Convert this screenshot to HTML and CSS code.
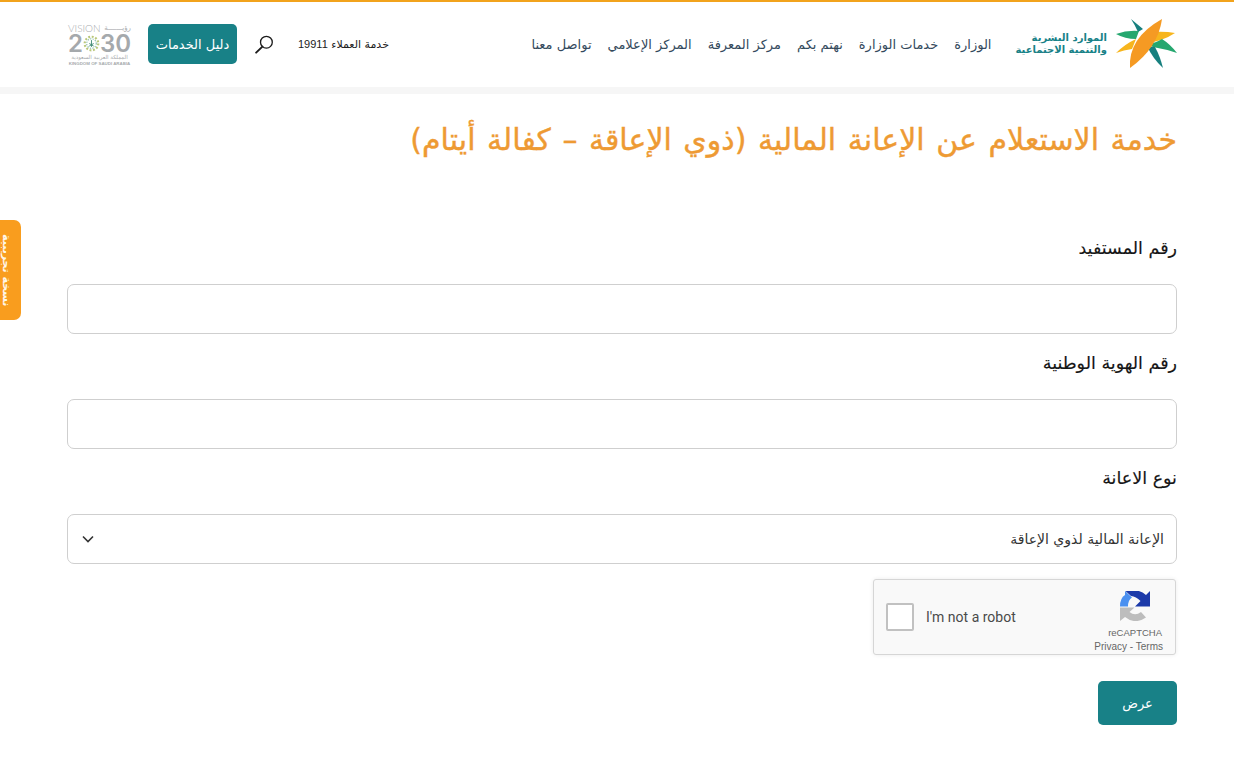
FILE: index.html
```html
<!DOCTYPE html>
<html lang="ar" dir="rtl">
<head>
<meta charset="utf-8">
<title>خدمة الاستعلام عن الإعانة المالية</title>
<link rel="stylesheet" href="styles.css">
</head>
<body>
<header class="site-header">
  <div class="header-inner">
    <div class="header-start">
      <a class="brand" href="#">
        <svg class="brand-mark" viewBox="0 0 62 51" width="62" height="51" aria-hidden="true">
          <path d="M16 1 L28 11 L23 14 Q20 7 16 1 Z" fill="#17807f"/>
          <path d="M1 16 Q12 12 24 13 L21 21 Q10 21 1 16 Z" fill="#25a76f"/>
          <path d="M1 35 Q10 26 21 21 L17 31 Q9 32 1 35 Z" fill="#f7b51d"/>
          <path d="M37 14 Q50 13 60 15 Q48 23 32 25 Z" fill="#f7b51d"/>
          <path d="M33 26 Q41 25 47 21 Q55 26 62 35 Q50 31 38 29 Z" fill="#25a76f"/>
          <path d="M32 28 L40 29 Q45 38 48 50 Q38 41 32 28 Z" fill="#17807f"/>
          <path d="M15 50 Q13 20 47 1 Q43 30 15 50 Z" fill="#f59a23"/>
        </svg>
        <span class="brand-name">الموارد البشرية<br>والتنمية الاجتماعية</span>
      </a>
      <nav class="main-nav">
        <a href="#">الوزارة</a>
        <a href="#">خدمات الوزارة</a>
        <a href="#">نهتم بكم</a>
        <a href="#">مركز المعرفة</a>
        <a href="#">المركز الإعلامي</a>
        <a href="#">تواصل معنا</a>
      </nav>
    </div>
    <div class="header-end">
      <span class="hotline">خدمة العملاء <span class="hotline-num">19911</span></span>
      <button class="search-btn" aria-label="بحث">
        <svg viewBox="0 0 20 20" width="19" height="19" aria-hidden="true">
          <circle cx="12" cy="7.6" r="6.2" fill="none" stroke="#1c1c1c" stroke-width="1.4"/>
          <path d="M7.8 12.2 L1.2 18.6" stroke="#1c1c1c" stroke-width="2" stroke-linecap="round"/>
        </svg>
      </button>
      <a class="services-btn" href="#">دليل الخدمات</a>
      <div class="vision" dir="ltr">
        <div class="vision-top"><span>VISION</span><span class="vision-ar">رؤيـــــــة</span></div>
        <div class="vision-year"><span>2</span><svg viewBox="0 0 20 20" width="19" height="19" aria-hidden="true"><circle cx="10" cy="10" r="8" fill="none" stroke="#b9c77a" stroke-width="2.6" stroke-dasharray="2.2 2"/><circle cx="10" cy="10" r="5.6" fill="none" stroke="#7fb9a4" stroke-width="1.2" stroke-dasharray="1.5 1.5"/><path d="M10 6 V14 M7.4 13 L12.6 10 M7.4 10 L12.6 13" stroke="#3f8a74" stroke-width="1.1" fill="none"/></svg><span>30</span></div>
        <div class="vision-sub">المملكة العربية السعودية</div>
        <div class="vision-en">KINGDOM OF SAUDI ARABIA</div>
      </div>
    </div>
  </div>
</header>
<div class="band"></div>
<aside class="side-tab"><span>نسخة تجريبية</span></aside>
<main class="content">
  <h1 class="page-title">خدمة الاستعلام عن الإعانة المالية (ذوي الإعاقة – كفالة أيتام)</h1>
  <form class="inquiry">
    <div class="field">
      <label class="field-label" for="ben">رقم المستفيد</label>
      <input class="field-control" id="ben" type="text">
    </div>
    <div class="field">
      <label class="field-label" for="nid">رقم الهوية الوطنية</label>
      <input class="field-control" id="nid" type="text">
    </div>
    <div class="field field-select">
      <label class="field-label" for="kind">نوع الاعانة</label>
      <div class="field-control select-box" id="kind">
        <span>الإعانة المالية لذوي الإعاقة</span>
        <svg viewBox="0 0 12 8" width="12" height="8" aria-hidden="true"><path d="M1 1.5 L6 6.5 L11 1.5" fill="none" stroke="#333" stroke-width="1.6"/></svg>
      </div>
    </div>
    <div class="captcha" dir="ltr">
      <span class="captcha-check"></span>
      <span class="captcha-text">I'm not a robot</span>
      <div class="captcha-brand">
        <svg class="captcha-logo" viewBox="0 0 30 30" width="30" height="30" aria-hidden="true">
          <path d="M5 0 L12 6.5 Q8 9 8 15.5 L0 15.5 Q0 7 5 4 Z" fill="#4a90f0"/>
          <path d="M11 5 L5.5 0 Q18 -3 26 4 L30 0 L30 15.5 L15 15.5 L20.5 10 Q16 5.5 11 5 Z" fill="#1c3aa9"/>
          <path d="M0 16.5 L14.5 16.5 L9.5 21 Q15 25.5 21 21 L26 26.5 Q15 34 5 26 L0 30 Z" fill="#bdbdbd"/>
        </svg>
        <span class="captcha-name">reCAPTCHA</span>
        <span class="captcha-links">Privacy - Terms</span>
      </div>
    </div>
    <div class="actions"><button class="submit" type="button">عرض</button></div>
  </form>
</main>
</body>
</html>
```
FILE: styles.css
```css
* { box-sizing: border-box; }
html, body { margin: 0; padding: 0; }
body {
  background: #fff;
  color: #1d1d1d;
  font-family: "DejaVu Sans", "Noto Sans", sans-serif;
  height: 760px;
  overflow: hidden;
  position: relative;
}
a { color: inherit; text-decoration: none; }

.site-header { height: 87px; background: #fff; border-top: 2px solid #f2a31c; }
.header-inner {
  margin: 0 57px 0 68px;
  height: 84px;
  display: flex;
  align-items: center;
  justify-content: space-between;
}
.header-start { display: flex; align-items: center; }
.brand { display: flex; align-items: center; gap: 8px; }
.brand-mark { display: block; margin-top: -2px; }
.brand-name {
  color: #188187;
  font-size: 10px;
  line-height: 12px;
  font-weight: 700;
  white-space: nowrap;
}
.main-nav {
  display: flex;
  gap: 16px;
  margin-right: 24px;
  font-size: 13px;
  color: #33495c;
  white-space: nowrap;
}
.header-end { display: flex; align-items: center; }
.hotline { font-size: 11px; white-space: nowrap; color: #222; }
.hotline-num { font-family: "Liberation Sans", sans-serif; font-size: 11px; }
.search-btn {
  background: none;
  border: 0;
  padding: 0;
  margin: 0 24px 0 18px;
  width: 19px;
  height: 19px;
}
.services-btn {
  background: #188187;
  color: #fff;
  font-size: 13px;
  width: 89px;
  height: 40px;
  border-radius: 5px;
  display: flex;
  align-items: center;
  justify-content: center;
  white-space: nowrap;
}
.vision {
  width: 63px;
  margin-right: 17px;
  color: #a7abae;
  font-family: "Liberation Sans", sans-serif;
  text-align: center;
}
.vision-top {
  display: flex;
  justify-content: space-between;
  font-family: Lato, sans-serif;
  font-weight: 300;
  font-size: 10px;
  line-height: 10px;
  white-space: nowrap;
}
.vision-ar { font-family: "DejaVu Sans", sans-serif; font-size: 7px; font-weight: 400; }
.vision-year {
  display: flex;
  align-items: center;
  justify-content: center;
  font-family: Inter, "Liberation Sans", sans-serif;
  font-size: 24px;
  line-height: 21px;
  font-weight: 600;
  color: #a5a9ac;
}
.vision-sub { font-family: "DejaVu Sans", sans-serif; font-size: 5.5px; line-height: 7px; white-space: nowrap; }
.vision-en { font-size: 4.4px; line-height: 5px; white-space: nowrap; font-weight: 700; }

.band { height: 7px; background: #f6f6f6; }

.side-tab {
  position: absolute;
  left: 0;
  top: 220px;
  width: 21px;
  height: 100px;
  background: #f99d1e;
  border-radius: 0 7px 7px 0;
  color: #fff6e8;
  display: flex;
  align-items: center;
  justify-content: flex-end;
  overflow: hidden;
}
.side-tab span {
  writing-mode: vertical-rl;
  font-size: 11px;
  font-weight: 700;
  white-space: nowrap;
  margin-right: 5px;
}

.content { margin: 0 57px 0 67px; }
.page-title {
  margin: 25px 0 0;
  height: 116px;
  font-size: 30px;
  line-height: 42px;
  font-weight: 400;
  word-spacing: 2px;
  color: #ee9a33;
  -webkit-text-stroke: 0.4px #ee9a33;
  white-space: nowrap;
}
.field { height: 115px; }
.field-label {
  display: block;
  height: 49px;
  font-size: 17.5px;
  line-height: 26px;
  color: #151515;
  -webkit-text-stroke: 0.15px #151515;
}
.field-control {
  display: block;
  width: 100%;
  height: 50px;
  border: 1px solid #cfcfcf;
  border-radius: 7px;
  background: #fff;
}
.select-box {
  display: flex;
  align-items: center;
  justify-content: space-between;
  padding: 0 12px 0 14px;
  font-size: 14px;
  color: #333;
}
.field-select { height: 114px; }
.captcha {
  width: 303px;
  height: 76px;
  margin-left: auto;
  margin-right: 1px;
  background: #f9f9f9;
  border: 1px solid #d6d6d6;
  border-radius: 3px;
  box-shadow: 0 0 4px rgba(0,0,0,.08);
  display: flex;
  align-items: center;
  font-family: Roboto, "Liberation Sans", sans-serif;
  padding-left: 12px;
}
.captcha-check {
  width: 28px;
  height: 28px;
  background: #fff;
  border: 2px solid #c1c1c1;
  border-radius: 2px;
}
.captcha-text { font-size: 14px; color: #4a4a4a; margin-left: 12px; }
.captcha-brand {
  margin-left: auto;
  display: flex;
  flex-direction: column;
  align-items: flex-end;
  align-self: stretch;
  padding-top: 11px;
  padding-right: 12px;
  font-family: "Liberation Sans", sans-serif;
  color: #666;
}
.captcha-logo { margin-right: 13px; }
.captcha-name { font-size: 9.5px; line-height: 14px; margin-top: 5px; margin-right: 1px; }
.captcha-links { font-size: 10px; line-height: 14px; white-space: nowrap; }
.actions { margin-top: 26px; }
.submit {
  width: 79px;
  height: 44px;
  background: #188187;
  color: #fff;
  border: 0;
  border-radius: 5px;
  font-family: inherit;
  font-size: 13px;
}
```
